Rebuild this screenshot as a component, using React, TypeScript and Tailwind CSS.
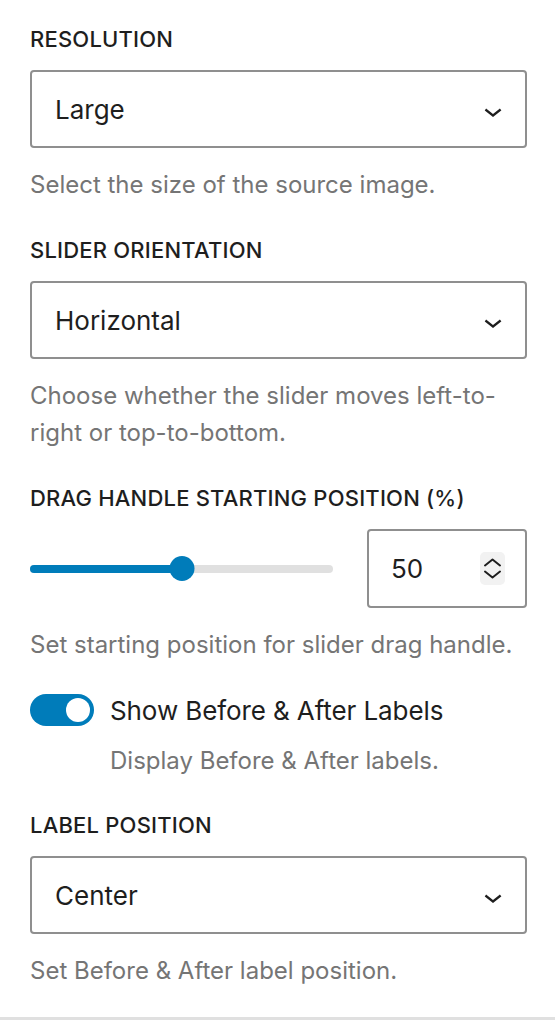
import { useState } from 'react';

function ChevronDown() {
  return (
    <svg viewBox="0 0 24 24" className="w-[36px] h-[36px] fill-[#1e1e1e] flex-shrink-0">
      <path d="M17.5 11.6L12 16l-5.5-4.4.9-1.2L12 14l4.6-3.6 1 1.2z" />
    </svg>
  );
}

function SpinIcon() {
  return (
    <div className="w-[25px] h-[33px] rounded-[5px] bg-[#f2f2f2] flex items-center justify-center">
      <svg viewBox="0 0 25 33" className="w-[25px] h-[33px] stroke-[#1e1e1e] fill-none">
        <path d="M5 13.5L12.5 7.5L20 13.5" strokeWidth="2" strokeLinecap="round" strokeLinejoin="round" />
        <path d="M5 19.5L12.5 25.5L20 19.5" strokeWidth="2" strokeLinecap="round" strokeLinejoin="round" />
      </svg>
    </div>
  );
}

function FieldLabel({ children }: { children: React.ReactNode }) {
  return (
    <div className="text-[22px] leading-[26px] font-medium uppercase text-[#1e1e1e] mb-[18px] tracking-[0.2px]">
      {children}
    </div>
  );
}

function Help({ children, className = 'mt-[18px]' }: { children: React.ReactNode; className?: string }) {
  return <p className={`text-[24px] leading-[37px] text-[#757575] ${className}`}>{children}</p>;
}

function SelectBox({ value }: { value: string }) {
  return (
    <div className="h-[78px] border-2 border-[#8f8f8f] rounded-[4px] flex items-center pl-[23px] pr-[14px]">
      <span className="flex-1 text-[26px] text-[#1e1e1e]">{value}</span>
      <div className="mt-[4px]">
        <ChevronDown />
      </div>
    </div>
  );
}

export default function App() {
  const [position] = useState(50);
  const [showLabels, setShowLabels] = useState(true);

  return (
    <div className="w-[555px] min-h-[1020px] bg-white pl-[30px] pr-[28px] pt-[26px] pb-[27px] border-b-[3px] border-[#e0e0e0] font-['Inter','Noto_Sans',sans-serif]">
      {/* Resolution */}
      <FieldLabel>Resolution</FieldLabel>
      <SelectBox value="Large" />
      <Help>Select the size of the source image.</Help>

      {/* Orientation */}
      <div className="mt-[34px]">
        <FieldLabel>Slider Orientation</FieldLabel>
        <SelectBox value="Horizontal" />
        <Help>Choose whether the slider moves left-to-right or top-to-bottom.</Help>
      </div>

      {/* Drag handle */}
      <div className="mt-[34px]">
        <FieldLabel>Drag Handle Starting Position (%)</FieldLabel>
        <div className="flex items-center gap-[34px] h-[79px]">
          <div className="relative w-[303px] h-[25px] flex items-center">
            <div className="w-full h-[8px] rounded-full bg-[#e0e0e0]" />
            <div className="absolute left-0 h-[8px] rounded-full bg-[#007cba]" style={{ width: `${position}%` }} />
            <div
              className="absolute w-[25px] h-[25px] rounded-full bg-[#007cba] -translate-x-1/2"
              style={{ left: `${position}%` }}
            />
          </div>
          <div className="flex-1 h-[79px] border-2 border-[#8f8f8f] rounded-[4px] flex items-center pl-[22px] pr-[20px]">
            <span className="flex-1 text-[26px] text-[#1e1e1e]">{position}</span>
            <SpinIcon />
          </div>
        </div>
        <Help>Set starting position for slider drag handle.</Help>
      </div>

      {/* Toggle */}
      <div className="mt-[31px]">
        <div className="flex items-center h-[32px] gap-[16px]">
          <button
            type="button"
            onClick={() => setShowLabels(!showLabels)}
            className={`w-[64px] h-[32px] rounded-full flex items-center px-[4px] flex-shrink-0 ${
              showLabels ? 'bg-[#007cba] justify-end' : 'bg-white border-2 border-[#1e1e1e] justify-start'
            }`}
          >
            <span className="w-[24px] h-[24px] rounded-full bg-white block" />
          </button>
          <span className="text-[26px] text-[#1e1e1e] tracking-[-0.1px]">Show Before &amp; After Labels</span>
        </div>
        <Help className="mt-[16px] pl-[80px]">Display Before &amp; After labels.</Help>
      </div>

      {/* Label position */}
      <div className="mt-[33px]">
        <FieldLabel>Label Position</FieldLabel>
        <SelectBox value="Center" />
        <Help>Set Before &amp; After label position.</Help>
      </div>
    </div>
  );
}
